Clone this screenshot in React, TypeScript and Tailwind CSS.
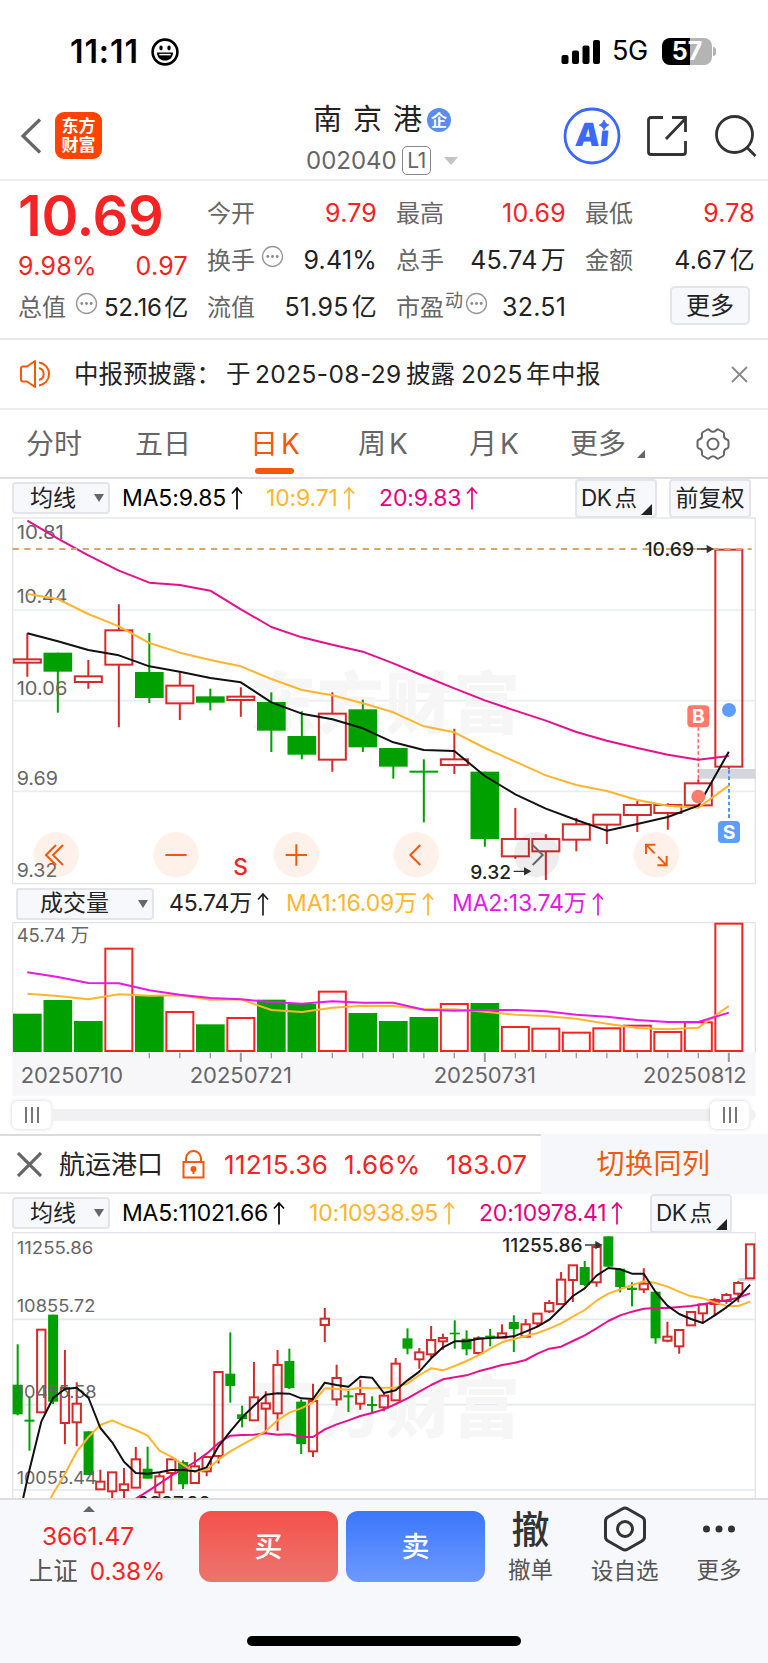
import { ReactNode } from "react";

type Candle = [string, number, number, number, number];

interface ITextProps {
  x: number;
  y: number;
  width: number;
  size: number;
  fill: string;
  children: string;
}

// chart data is in chart units, 3 units per pixel
// [direction, high, body top, body bottom, low]
const dayCandles: Candle[] = [
  ["r", 370, 448, 458, 500],
  ["g", 428, 428, 485, 608],
  ["r", 450, 499, 516, 536],
  ["r", 283, 361, 464, 652],
  ["g", 369, 486, 564, 579],
  ["r", 487, 527, 580, 630],
  ["g", 536, 559, 578, 601],
  ["r", 532, 560, 570, 620],
  ["g", 547, 576, 662, 726],
  ["g", 604, 678, 734, 748],
  ["r", 547, 611, 749, 785],
  ["g", 569, 598, 712, 726],
  ["g", 714, 714, 770, 806],
  ["g", 748, 782, 788, 937],
  ["r", 656, 748, 765, 792],
  ["g", 785, 785, 987, 1010],
  ["r", 894, 987, 1039, 1046],
  ["r", 973, 987, 1024, 1110],
  ["r", 924, 943, 989, 1024],
  ["r", 914, 914, 944, 1002],
  ["r", 873, 885, 915, 966],
  ["r", 880, 885, 909, 959],
  ["r", 808, 820, 886, 886],
  ["r", 119, 119, 770, 778],
];
const dayMa5 = [370, 394, 420, 436, 469, 485, 504, 517, 577, 611, 628, 655, 697, 720, 723, 798, 853, 896, 930, 962, 942, 921, 887, 725];
const dayMa10 = [252, 267, 312, 349, 399, 428, 450, 469, 507, 540, 556, 580, 607, 649, 667, 714, 755, 796, 825, 843, 870, 887, 893, 827];
const dayMa20 = [32, 86, 136, 182, 218, 225, 242, 298, 351, 382, 404, 425, 460, 498, 535, 571, 602, 632, 666, 692, 714, 734, 749, 738];

const volumes: [string, number][] = [
  ["g", 401], ["g", 360], ["g", 423], ["r", 206], ["g", 346], ["r", 396],
  ["g", 433], ["r", 414], ["g", 359], ["g", 372], ["r", 335], ["g", 399],
  ["g", 423], ["g", 411], ["r", 372], ["g", 369], ["r", 441], ["r", 446],
  ["r", 458], ["r", 445], ["r", 437], ["r", 456], ["r", 427], ["r", 131],
];
const volMa1 = [341, 348, 358, 343, 347, 346, 359, 358, 390, 396, 383, 377, 378, 388, 388, 395, 404, 408, 416, 431, 444, 448, 443, 378];
const volMa2 = [277, 291, 309, 310, 331, 344, 354, 358, 366, 371, 364, 368, 368, 389, 392, 390, 390, 394, 404, 410, 420, 426, 426, 398];

const sectorCandles: Candle[] = [
  ["g", 644, 765, 854, 857], ["g", 800, 870, 876, 963], ["r", 600, 600, 848, 848],
  ["g", 555, 555, 816, 823], ["r", 661, 775, 880, 944], ["r", 758, 822, 878, 950],
  ["g", 905, 905, 1036, 1036], ["r", 1020, 1056, 1079, 1079], ["r", 1028, 1028, 1085, 1110],
  ["r", 1015, 1064, 1081, 1110], ["r", 952, 989, 1074, 1074], ["g", 951, 1017, 1047, 1047],
  ["r", 1030, 1040, 1088, 1110], ["r", 989, 989, 1030, 1083], ["g", 992, 997, 1064, 1078],
  ["r", 968, 1010, 1060, 1060], ["r", 980, 982, 1025, 1040], ["r", 727, 727, 979, 1002],
  ["g", 608, 732, 769, 819], ["g", 828, 854, 868, 893], ["r", 697, 803, 872, 872],
  ["r", 785, 821, 837, 910], ["r", 661, 706, 851, 903], ["g", 657, 694, 775, 778],
  ["g", 810, 816, 943, 973], ["r", 762, 814, 965, 982], ["r", 535, 567, 586, 637],
  ["r", 705, 745, 809, 828], ["g", 784, 797, 803, 847], ["r", 750, 793, 822, 840],
  ["g", 800, 823, 829, 850], ["r", 790, 798, 833, 845], ["r", 685, 702, 812, 812],
  ["g", 596, 626, 657, 674], ["r", 655, 668, 689, 717], ["r", 589, 631, 674, 684],
  ["r", 612, 625, 635, 660], ["g", 572, 609, 614, 657], ["g", 602, 627, 659, 677],
  ["r", 620, 626, 670, 675], ["g", 598, 618, 624, 650], ["r", 584, 611, 624, 624],
  ["g", 557, 577, 598, 667], ["r", 568, 584, 621, 621], ["r", 552, 552, 581, 590],
  ["r", 511, 520, 545, 550], ["r", 427, 450, 523, 523], ["r", 407, 407, 451, 517],
  ["g", 394, 412, 466, 470], ["r", 345, 352, 458, 471], ["g", 320, 320, 411, 411],
  ["g", 416, 417, 472, 488], ["g", 458, 474, 481, 530], ["r", 416, 462, 479, 490],
  ["g", 486, 486, 626, 642], ["r", 576, 621, 633, 638], ["r", 600, 601, 650, 672],
  ["r", 547, 547, 587, 587], ["r", 524, 524, 551, 580], ["r", 505, 511, 523, 560],
  ["r", 490, 496, 514, 522], ["r", 454, 460, 492, 518], ["r", 344, 344, 446, 446],
];
const sectorMa5 = [1180, 1020, 876, 805, 778, 774, 805, 895, 938, 996, 1030, 1032, 1028, 1021, 1021, 1025, 1013, 950, 905, 863, 828, 795, 791, 792, 806, 808, 759, 766, 771, 741, 744, 790, 782, 752, 726, 686, 653, 635, 635, 627, 625, 623, 620, 606, 591, 570, 536, 499, 476, 438, 415, 419, 432, 432, 487, 528, 553, 568, 580, 557, 533, 505, 465];
const sectorMa10 = [1300, 1230, 1160, 1092, 1032, 966, 922, 886, 872, 888, 901, 918, 963, 981, 1005, 1027, 1020, 990, 965, 945, 926, 904, 872, 849, 836, 818, 776, 778, 780, 774, 776, 774, 774, 762, 736, 716, 722, 709, 694, 677, 657, 638, 628, 619, 610, 597, 581, 561, 541, 513, 492, 479, 466, 455, 460, 471, 486, 500, 506, 518, 529, 529, 516];
const sectorMa20 = [1350, 1330, 1310, 1290, 1270, 1250, 1230, 1210, 1170, 1150, 1107, 1085, 1062, 1038, 1018, 997, 972, 940, 918, 916, 915, 911, 915, 914, 922, 922, 899, 884, 872, 859, 850, 839, 823, 806, 786, 766, 749, 743, 737, 725, 716, 706, 700, 691, 672, 657, 651, 634, 617, 596, 574, 557, 546, 537, 535, 535, 532, 529, 524, 517, 512, 504, 491];

const dayX = (i: number) => 82 + i * 91.5;
const sectorX = (i: number) => 53 + i * 35.44;

const ChartText = ({ x, y, width, size, fill, children }: ITextProps) => (
  <text x={x} y={y} fontSize={size} fill={fill} textLength={width} lengthAdjust="spacingAndGlyphs">
    {children}
  </text>
);

const Line = ({ data, x, color }: { data: number[]; x: (i: number) => number; color: string }) => (
  <polyline
    points={data.map((y, i) => `${x(i)},${y}`).join(" ")}
    fill="none"
    stroke={color}
    strokeWidth={6}
    strokeLinejoin="round"
  />
);

const Candles = ({ data, x, width }: { data: Candle[]; x: (i: number) => number; width: number }) => (
  <>
    {data.map(([dir, high, top, bottom, low], i) => {
      const cx = x(i);
      if (dir === "g") {
        return (
          <g key={i} fill="#00a000">
            <rect x={cx - 3} y={high} width={6} height={low - high} />
            <rect x={cx - width / 2} y={top} width={width} height={bottom - top} />
          </g>
        );
      }
      return (
        <g key={i} fill="none" stroke="#d42a2a" strokeWidth={6}>
          <path d={`M${cx} ${high}V${top}M${cx} ${bottom}V${low}`} />
          <rect x={cx - width / 2 + 2.5} y={top} width={width - 5} height={bottom - top} />
        </g>
      );
    })}
  </>
);

const Watermark = ({ y }: { y: number }) => (
  <text x={748} y={y} fontSize={200} fontWeight={900} fill="#f6f6f7" textLength={812}>
    东方财富
  </text>
);

const More = () => (
  <svg className="size-[23px] shrink-0" viewBox="0 0 23 23">
    <circle cx="11.5" cy="11.5" r="10" fill="none" stroke="#999" strokeWidth="1.4" />
    <g fill="#888">
      <circle cx="6.8" cy="11.5" r="1.4" />
      <circle cx="11.5" cy="11.5" r="1.4" />
      <circle cx="16.2" cy="11.5" r="1.4" />
    </g>
  </svg>
);

const Up = () => (
  <svg className="w-[12px] h-[24px] shrink-0" viewBox="0 0 12 24" fill="none" stroke="currentColor" strokeWidth="1.7">
    <path d="M6 23.5V2M1 7.5L6 2L11 7.5" />
  </svg>
);

const Quote = ({ label, value, red }: { label: ReactNode; value: string; red?: boolean }) => (
  <div className="flex h-[47px] items-center justify-between">
    <div className="flex items-center text-[24px] text-[#666]">{label}</div>
    <p className={`text-[25px] tracking-[0.2px] [word-spacing:-4px] ${red ? "text-[#f52323]" : "text-[#222]"}`}>{value}</p>
  </div>
);

const Select = ({ label, className }: { label: string; className: string }) => (
  <div className={`flex items-center justify-between rounded border-2 border-[#e4e5ea] bg-[#f7f8fb] pr-1 text-[23px] leading-none text-[#222] ${className}`}>
    <span>{label}</span>
    <svg className="h-[8px] w-[10px]" viewBox="0 0 10 8">
      <path d="M0 0H10L5 8Z" fill="#666" />
    </svg>
  </div>
);

const DkButton = () => (
  <div className="flex h-[39px] w-[82px] shrink-0 items-center rounded border-2 border-[#e4e5ea] bg-[#f7f8fb] pl-1 text-[22.5px] text-[#222]">
    <span className="w-[59px] tracking-[-0.4px] [word-spacing:-3px]">DK 点</span>
    <svg className="ml-px mt-[22px] size-[11px] shrink-0" viewBox="0 0 11 11">
      <path d="M11 0V11H0Z" fill="#222" />
    </svg>
  </div>
);

const StatusBar = () => (
  <div className="flex h-[90px] items-center pt-[13px] pl-[70px] text-black">
    <p className="w-[81px] text-[32px] font-semibold tracking-[0.9px]">11:11</p>
    <svg className="size-[28px]" viewBox="0 0 28 28">
      <circle cx="14" cy="14" r="12.4" fill="none" stroke="#000" strokeWidth="2.6" />
      <ellipse cx="10" cy="10" rx="1.7" ry="2.4" />
      <ellipse cx="18" cy="10" rx="1.7" ry="2.4" />
      <path d="M6 14.5H22C22 19.5 18.5 22.6 14 22.6S6 19.5 6 14.5Z" />
      <path d="M8.3 16.6H19.7" stroke="#fff" strokeWidth="1.5" />
    </svg>
    <svg className="ml-[382px] h-[24px] w-[39px]" viewBox="0 0 39 24">
      <rect x="0.5" y="15" width="7" height="9" rx="2" />
      <rect x="11" y="10.5" width="7" height="13.5" rx="2" />
      <rect x="21.5" y="5.5" width="7" height="18.5" rx="2" />
      <rect x="32" y="0" width="7" height="24" rx="2" />
    </svg>
    <p className="ml-[12px] w-[50px] text-[27px] tracking-[-0.5px]">5G</p>
    <div className="flex h-[27px] w-[50px] items-center justify-center rounded-[8px] bg-gradient-to-r from-black from-57% to-[#b4b4b4] to-57% text-[25px] leading-none font-bold text-white">
      57
    </div>
    <div className="ml-px h-[9px] w-[3px] rounded-r-full bg-[#b4b4b4]" />
  </div>
);

const Header = () => (
  <header className="flex h-[91px] items-center border-b-2 border-[#ececee] pt-[2px] pl-[20px]">
    <svg className="h-[36px] w-[22px]" viewBox="0 0 22 36" fill="none" stroke="#666" strokeWidth="3.2">
      <path d="M20 1.5L3 18L20 34.5" />
    </svg>
    <div className="ml-[13px] flex size-[47px] flex-col items-center justify-center rounded-[9px] bg-[#ff4400] text-[17px] leading-[19px] font-bold text-white">
      <span>东方</span>
      <span>财富</span>
    </div>
    <div className="mt-[3px] ml-[204px] w-[255px]">
      <div className="flex h-[40px] items-center pl-[7px]">
        <span className="text-[29px] tracking-[11px] text-[#222]">南京港</span>
        <span className="-ml-[6px] flex size-[24px] items-center justify-center rounded-full bg-[#5b8def] text-[16px] font-bold text-white">
          企
        </span>
      </div>
      <div className="flex h-[34px] items-center pt-[7px] text-[#666]">
        <span className="w-[96px] text-[24px]">002040</span>
        <span className="flex h-[29px] w-[29px] items-center justify-center rounded-[5px] border-[1.5px] border-[#888] text-[21px] tracking-[-0.5px]">
          L1
        </span>
        <svg className="ml-[13px] h-[8px] w-[14px]" viewBox="0 0 14 8">
          <path d="M0 0H14L7 8Z" fill="#c4c4c4" />
        </svg>
      </div>
    </div>
    <svg className="ml-[2px] size-[58px]" viewBox="0 0 58 58">
      <circle cx="29" cy="29" r="27" fill="none" stroke="#3c68fb" strokeWidth="2.8" />
      <text
        x="12"
        y="39.5"
        fontSize="32"
        fontWeight="900"
        fill="#3c68fb"
        textLength="34"
        lengthAdjust="spacingAndGlyphs"
        transform="skewX(-5) translate(3 0)"
      >
        Ai
      </text>
      <rect x="34" y="12" width="13" height="11.5" fill="#fff" />
      <path d="M41 13Q42 17.200 45.700 18Q42 19 41 22.800Q40 19 36.300 18Q40 17.200 41 13Z" fill="#3c68fb" stroke="#3c68fb" />
    </svg>
    <svg className="ml-[25px] size-[42px]" viewBox="0 0 42 42" fill="none" stroke="#333" strokeWidth="2.8">
      <path d="M17 2.500H5Q2.500 2.500 2.500 5V37Q2.500 39.500 5 39.500H37Q39.500 39.500 39.500 37V26M20 24L39.500 3.500M26 2.500H39.500V17" />
    </svg>
    <svg className="ml-[25px] size-[44px]" viewBox="0 0 44 44" fill="none" stroke="#333" strokeWidth="2.8">
      <circle cx="21.500" cy="20.500" r="18" />
      <path d="M33.500 33L42.500 42" />
    </svg>
  </header>
);

const QuotePanel = () => (
  <section className="flex h-[159px] border-b-2 border-[#e9e9ec] pt-[9px] pl-[18px]">
    <div className="w-[170px]">
      <p className="-mt-[2px] mb-[2px] h-[56px] text-[56px] leading-[56px] font-semibold tracking-[-0.3px] text-[#f52323]">
        10.69
      </p>
      <div className="flex h-[38px] items-center justify-between pt-[4px] text-[25px] tracking-[0.3px] text-[#f52323]">
        <span>9.98%</span>
        <span>0.97</span>
      </div>
      <div className="flex h-[47px] items-center justify-between text-[24px]">
        <span className="text-[#666]">总值</span>
        <span className="mb-[9px] ml-[3px] flex">
          <More />
        </span>
        <span className="tracking-[-0.2px] text-[#222] [word-spacing:-4px]">52.16 亿</span>
      </div>
    </div>
    <div className="ml-[19px] w-[170px]">
      <Quote label="今开" value="9.79" red />
      <Quote
        label={
          <>
            换手
            <span className="mb-[9px] ml-[6px] flex">
              <More />
            </span>
          </>
        }
        value="9.41%"
      />
      <Quote label="流值" value="51.95 亿" />
    </div>
    <div className="ml-[19px] w-[170px]">
      <Quote label="最高" value="10.69" red />
      <Quote label="总手" value="45.74 万" />
      <Quote
        label={
          <>
            市盈
            <span className="mb-[14px] ml-px text-[18px]">动</span>
            <span className="mb-[9px] ml-[2px] flex">
              <More />
            </span>
          </>
        }
        value="32.51"
      />
    </div>
    <div className="ml-[19px] w-[170px]">
      <Quote label="最低" value="9.78" red />
      <Quote label="金额" value="4.67 亿" />
      <div className="mt-[2px] ml-[85px] flex h-[39px] w-[80px] items-center justify-center rounded-[5px] border-2 border-[#e4e5ea] bg-[#f7f8fb] text-[24px] text-[#222]">
        更多
      </div>
    </div>
  </section>
);

const Notice = () => (
  <section className="flex h-[70px] items-center border-b-2 border-[#ececee] pl-[19px]">
    <svg className="h-[30px] w-[34px]" viewBox="0 0 34 30" fill="none" stroke="#f25a0a" strokeWidth="2">
      <path d="M16 2V28L8 22.5H4Q2 22.5 2 20.5V9.5Q2 7.5 4 7.5H8Z" strokeLinejoin="round" />
      <path d="M20 3.5A11.6 11.6 0 0 1 20 26.5M20 9A6.2 6.2 0 0 1 20 21" />
    </svg>
    <p className="ml-[21px] flex w-[657px] text-[24.5px] text-[#222]">
      <span className="w-[152px]">中报预披露：</span>
      <span className="w-[29px]">于</span>
      <span className="w-[151px] tracking-[0.4px]">2025-08-29</span>
      <span className="w-[55px]">披露</span>
      <span className="w-[65px] tracking-[0.4px]">2025</span>
      <span className="tracking-[0.5px]">年中报</span>
    </p>
    <svg className="size-[17px]" viewBox="0 0 17 17" stroke="#888" strokeWidth="1.8">
      <path d="M1 1L16 16M16 1L1 16" />
    </svg>
  </section>
);

const Tabs = () => (
  <nav className="flex h-[69px] items-center border-b-2 border-[#dddde3] pl-[26px] text-[28px] text-[#666] [word-spacing:-5px]">
    <span className="w-[109px]">分时</span>
    <span className="w-[115px]">五日</span>
    <span className="relative w-[108px] text-[#f25a0a]">
      日 K
      <i className="absolute -bottom-[9px] left-[5px] h-[6px] w-[39px] rounded-full bg-[#f25a0a]" />
    </span>
    <span className="w-[111px]">周 K</span>
    <span className="w-[101px]">月 K</span>
    <span className="w-[67px]">更多</span>
    <svg className="mt-[20px] size-[8px]" viewBox="0 0 8 8">
      <path d="M8 0V8H0Z" fill="#666" />
    </svg>
    <svg className="ml-[50px] size-[36px]" viewBox="0 0 36 36" fill="none" stroke="#666" strokeWidth="2">
      <path
        d="M12.5 3.5Q14 3 15 4.5Q18 7 21 4.5Q22 3 23.5 3.5L28 6Q29.5 7 29 8.5Q28.500 12.500 32 13.500Q33.500 14 33.500 15.500V20.500Q33.500 22 32 22.500Q28.500 23.500 29 27.500Q29.500 29 28 30L23.500 32.500Q22 33 21 31.500Q18 29 15 31.500Q14 33 12.500 32.500L8 30Q6.500 29 7 27.500Q7.500 23.500 4 22.500Q2.500 22 2.500 20.500V15.500Q2.500 14 4 13.500Q7.500 12.500 7 8.500Q6.500 7 8 6Z"
        strokeLinejoin="round"
      />
      <circle cx="18" cy="18" r="5.5" />
    </svg>
  </nav>
);

const DayChart = () => (
  <section>
    <div className="flex h-[38px] items-center pl-[12px] text-[23px]">
      <Select label="均线" className="h-[32px] w-[98px] pl-[16px]" />
      <p className="ml-[12px] flex w-[144px] items-center gap-[5px] text-black">
        <span className="tracking-[-0.15px]">MA5:9.85</span>
        <Up />
      </p>
      <p className="flex w-[113px] items-center gap-[5px] text-[#ffb52e]">
        <span className="tracking-[-0.15px]">10:9.71</span>
        <Up />
      </p>
      <p className="flex w-[196px] items-center gap-[5px] text-[#e6007e]">
        <span className="tracking-[-0.15px]">20:9.83</span>
        <Up />
      </p>
      <DkButton />
      <div className="ml-[12px] flex h-[39px] w-[82px] items-center justify-center rounded border-2 border-[#e4e5ea] bg-[#f7f8fb] text-[23px] text-[#222]">
        前复权
      </div>
    </div>
    <svg className="block h-[368px] w-[768px]" viewBox="0 21 2304 1104">
      <rect x="38" y="24" width="2228" height="1097" fill="none" stroke="#e3e4e9" strokeWidth="4" />
      <path d="M38 300H2266M38 572H2266M38 844H2266" stroke="#e9edf3" strokeWidth="5" />
      <Watermark y={653} />
      <rect x="2095" y="777" width="171" height="29" fill="#d3d6db" />
      <Candles data={dayCandles} x={dayX} width={86} />
      <ChartText x={50} y={88} width={142} size={58} fill="#666">10.81</ChartText>
      <ChartText x={50} y={279} width={152} size={58} fill="#666">10.44</ChartText>
      <ChartText x={50} y={554} width={152} size={58} fill="#666">10.06</ChartText>
      <ChartText x={50} y={826} width={124} size={58} fill="#666">9.69</ChartText>
      <ChartText x={50} y={1100} width={122} size={58} fill="#666">9.32</ChartText>
      <path d="M2095 652V808" stroke="#ff6b5a" strokeWidth="5" strokeDasharray="10 8" />
      <path d="M2187 780V930" stroke="#4c97ff" strokeWidth="6" strokeDasharray="11 8" />
      <Line data={dayMa20} x={dayX} color="#e6108e" />
      <Line data={dayMa10} x={dayX} color="#ffb52e" />
      <Line data={dayMa5} x={dayX} color="#111" />
      <path d="M38 117H2255" stroke="#dba468" strokeWidth="6" strokeDasharray="18.500 16.500" />
      <g fontWeight={500}>
        <ChartText x={1934} y={139} width={148} size={57} fill="#222">10.69</ChartText>
        <ChartText x={1411} y={1107} width={122} size={57} fill="#222">9.32</ChartText>
      </g>
      <g fill="#333" stroke="#333" strokeWidth="4">
        <path d="M2090 117H2125M2122 108L2138 117L2122 126Z" />
        <path d="M1541 1084H1578M1574 1075L1590 1084L1574 1093Z" />
      </g>
      <g>
        <rect x="2062" y="586" width="66" height="66" rx="12" fill="#ff7a6b" />
        <text x="2095" y="639" textAnchor="middle" fontSize="58" fontWeight="700" fill="#fff">B</text>
        <rect x="2154" y="933" width="66" height="66" rx="12" fill="#5c9dff" />
        <text x="2187" y="987" textAnchor="middle" fontSize="58" fontWeight="700" fill="#fff">S</text>
        <circle cx="2095" cy="860" r="21" fill="#ff7a6b" />
        <circle cx="2187" cy="600" r="21" fill="#5c9dff" />
      </g>
      <g fill="#f9762b" fillOpacity="0.1">
        <circle cx="169" cy="1034" r="68" />
        <circle cx="528" cy="1034" r="68" />
        <circle cx="889" cy="1034" r="68" />
        <circle cx="1249" cy="1034" r="68" />
        <circle cx="1969" cy="1034" r="68" />
      </g>
      <circle cx="1610" cy="1034" r="68" fill="#000" fillOpacity="0.07" />
      <g fill="none" stroke="#f25a0a" strokeWidth="6">
        <path d="M168 1005L138 1035L168 1065M189 1005L159 1035L189 1065" />
        <path d="M496 1035H560M857 1035H921M889 1003V1067" />
        <path d="M1261 1005L1231 1035L1261 1065" />
        <path d="M1938 1032V1004H1966M1938 1004L1964 1030M2000 1038V1066H1972M2000 1066L1974 1040" />
      </g>
      <path d="M1598 1005L1628 1035L1598 1065" fill="none" stroke="#666" strokeWidth="6" />
      <text x="700" y="1096" fontSize="68" fontWeight="500" fill="#f52323">S</text>
    </svg>
  </section>
);

const VolumeChart = () => (
  <section>
    <div className="flex h-[37px] items-center pl-[16px] text-[23px]">
      <Select label="成交量" className="h-[32px] w-[138px] pl-[22px]" />
      <p className="ml-[15px] flex w-[117px] items-center gap-[5px] text-[#222]">
        <span className="tracking-[-0.15px]">45.74万</span>
        <Up />
      </p>
      <p className="flex w-[166px] items-center gap-[5px] text-[#ffb52e]">
        <span className="tracking-[-0.15px]">MA1:16.09万</span>
        <Up />
      </p>
      <p className="flex items-center gap-[5px] text-[#e619e6]">
        <span className="tracking-[-0.15px]">MA2:13.74万</span>
        <Up />
      </p>
    </div>
    <svg className="block h-[174px] w-[768px]" viewBox="0 126 2304 522">
      <rect x="37" y="517" width="2230" height="130" fill="#f7f7fa" />
      <path d="M38 518V128H2266V518" fill="none" stroke="#e3e4e9" strokeWidth="4" />
      {volumes.map(([dir, top], i) =>
        dir === "g" ? (
          <rect key={i} x={dayX(i) - 43} y={top} width={86} height={516 - top} fill="#00a000" />
        ) : (
          <rect key={i} x={dayX(i) - 40.5} y={top} width={81} height={513 - top} fill="#fff" stroke="#f72323" strokeWidth={6} />
        )
      )}
      {volumes.map((_, i) =>
        i > 3 ? (
          <path key={i} d={i % 8 === 7 ? `M${dayX(i)} 518v28` : `M${dayX(i)} 518v17`} stroke="#999" strokeWidth={i % 8 === 7 ? 6 : 4} />
        ) : null
      )}
      <Line data={volMa1} x={dayX} color="#ffb52e" />
      <Line data={volMa2} x={dayX} color="#e619e6" />
      <ChartText x={50} y={187} width={218} size={57} fill="#666">45.74 万</ChartText>
      <ChartText x={62} y={610} width={307} size={64} fill="#666">20250710</ChartText>
      <ChartText x={569} y={610} width={307} size={64} fill="#666">20250721</ChartText>
      <ChartText x={1301} y={610} width={307} size={64} fill="#666">20250731</ChartText>
      <ChartText x={1929} y={610} width={311} size={64} fill="#666">20250812</ChartText>
    </svg>
    <div className="flex h-[38px] items-center pr-[12px] pl-[12px]">
      <Handle />
      <div className="h-[12px] flex-1 bg-[#f1f1f4]" />
      <Handle />
      <div className="h-[12px] w-[7px] rounded-r-full bg-[#f1f1f4]" />
    </div>
  </section>
);

const Handle = () => (
  <div className="flex h-[28px] w-[39px] items-center justify-center gap-[4px] rounded-[6px] bg-white shadow-[0_0_4px_rgba(0,0,0,0.18)]">
    <i className="h-[16px] w-[2px] bg-[#777]" />
    <i className="h-[16px] w-[2px] bg-[#777]" />
    <i className="h-[16px] w-[2px] bg-[#777]" />
  </div>
);

const Sector = () => (
  <section>
    <div className="flex h-[60px] items-stretch text-[26px]">
      <div className="flex w-[541px] items-center border-t-2 border-b-2 border-t-[#dadae1] border-b-[#e9e9ec] pl-[17px]">
        <svg className="size-[25px]" viewBox="0 0 25 25" stroke="#666" strokeWidth="3.2">
          <path d="M1 1L24 24M24 1L1 24" />
        </svg>
        <span className="ml-[17px] w-[123px] text-[#222]">航运港口</span>
        <svg className="h-[29px] w-[23px]" viewBox="0 0 23 29" fill="none" stroke="#f25a0a" strokeWidth="2">
          <path d="M1.5 12H21.5V27.5H1.5ZM4 12V8.5A7.5 7.5 0 0 1 19 8.5V12" />
          <path d="M11.5 20V24" />
          <circle cx="11.5" cy="19" r="2" fill="#f25a0a" />
        </svg>
        <span className="ml-[19px] w-[120px] tracking-[0.3px] text-[#f52323]">11215.36</span>
        <span className="w-[102px] tracking-[0.3px] text-[#f52323]">1.66%</span>
        <span className="tracking-[0.3px] text-[#f52323]">183.07</span>
      </div>
      <div className="flex flex-1 items-center justify-center bg-[#f6f7fa] pr-[2px] text-[28px] tracking-[0.5px] text-[#f25a0a]">
        切换同列
      </div>
    </div>
    <div className="flex h-[38px] items-center pl-[12px] text-[23px]">
      <Select label="均线" className="h-[32px] w-[98px] pl-[16px]" />
      <p className="ml-[12px] flex w-[187px] items-center gap-[5px] text-black">
        <span className="tracking-[-0.2px]">MA5:11021.66</span>
        <Up />
      </p>
      <p className="flex w-[170px] items-center gap-[5px] text-[#ffb52e]">
        <span className="tracking-[-0.2px]">10:10938.95</span>
        <Up />
      </p>
      <p className="flex w-[171px] items-center gap-[5px] text-[#e6007e]">
        <span className="tracking-[-0.2px]">20:10978.41</span>
        <Up />
      </p>
      <DkButton />
    </div>
    <svg className="block h-[266px] w-[768px]" viewBox="0 307 2304 798">
      <path d="M38 1110V309H2266V1110" fill="none" stroke="#e3e4e9" strokeWidth="4" />
      <path d="M38 569H2266M38 825H2266M38 1081H2266" stroke="#e4e8f0" strokeWidth="5" />
      <Watermark y={907} />
      <rect x="2215" y="445" width="52" height="9" fill="#d3d6db" />
      <Candles data={sectorCandles} x={sectorX} width={30} />
      <ChartText x={50} y={372} width={230} size={51} fill="#666">11255.86</ChartText>
      <ChartText x={50} y={547} width={236} size={51} fill="#666">10855.72</ChartText>
      <ChartText x={50} y={805} width={240} size={51} fill="#666">10455.58</ChartText>
      <ChartText x={50} y={1062} width={240} size={51} fill="#666">10055.44</ChartText>
      <Line data={sectorMa20} x={sectorX} color="#e6108e" />
      <Line data={sectorMa10} x={sectorX} color="#ffb52e" />
      <Line data={sectorMa5} x={sectorX} color="#111" />
      <g fontWeight={500}>
        <ChartText x={1507} y={366} width={241} size={55} fill="#222">11255.86</ChartText>
        <ChartText x={412} y={1141} width={220} size={55} fill="#222">9887.80</ChartText>
      </g>
      <path d="M1755 346H1792M1788 337L1804 346L1788 355Z" fill="#333" stroke="#333" strokeWidth="4" />
    </svg>
  </section>
);

const NavItem = ({ label, children }: { label: string; children: ReactNode }) => (
  <div className="flex flex-col items-center text-[#555]">
    <div className="flex h-[48px] items-center text-[#333]">{children}</div>
    <span className="mt-px text-[22.5px] leading-[36px]">{label}</span>
  </div>
);

const BottomBar = () => (
  <footer className="h-[165px] border-t-2 border-[#dddde2] bg-[#f7f8fb]">
    <div className="flex h-[88px] pt-[6px]">
      <div className="flex w-[199px] flex-col items-center pr-[5px]">
        <svg className="mr-[17px] h-[7px] w-[14px]" viewBox="0 0 14 7">
          <path d="M0 7H14L7 0Z" fill="#666" />
        </svg>
        <p className="mt-[6px] mr-[18px] text-[24.5px] leading-[36px] text-[#f52323]">3661.47</p>
        <p className="flex gap-[12px] text-[24.5px] leading-[34px]">
          <span className="text-[#555]">上证</span>
          <span className="text-[#f52323]">0.38%</span>
        </p>
      </div>
      <div className="mt-[5px] flex h-[71px] w-[139px] items-center justify-center rounded-[12px] bg-gradient-to-b from-[#f4504a] to-[#ec746d] text-[28px] font-medium text-white">
        买
      </div>
      <div className="mt-[5px] ml-[8px] flex h-[71px] w-[139px] items-center justify-center rounded-[12px] bg-gradient-to-b from-[#3b77fa] to-[#6c99ff] text-[28px] font-medium text-white">
        卖
      </div>
      <div className="ml-[23px] flex flex-1 gap-[38px]">
        <NavItem label="撤单">
          <span className="text-[38px] leading-none font-medium">撤</span>
        </NavItem>
        <NavItem label="设自选">
          <svg className="h-[46px] w-[44px]" viewBox="0 0 44 46" fill="none" stroke="#333" strokeWidth="3">
            <path d="M19.5 2.7Q22 1.3 24.5 2.7L39 11Q41.5 12.5 41.5 15V31Q41.5 33.5 39 35L24.5 43.3Q22 44.7 19.5 43.3L5 35Q2.5 33.5 2.5 31V15Q2.5 12.5 5 11Z" />
            <circle cx="22" cy="23" r="7.5" />
          </svg>
        </NavItem>
        <NavItem label="更多">
          <svg className="h-[8px] w-[34px]" viewBox="0 0 34 8" fill="#333">
            <circle cx="4.5" cy="4" r="3.5" />
            <circle cx="17" cy="4" r="3.5" />
            <circle cx="29.5" cy="4" r="3.5" />
          </svg>
        </NavItem>
      </div>
    </div>
    <div className="mx-auto mt-[48px] h-[10px] w-[274px] rounded-full bg-black" />
  </footer>
);

export default function App() {
  return (
    <main className="flex h-[1663px] w-[768px] flex-col overflow-hidden bg-white font-['Inter','Noto_Sans_CJK_SC',sans-serif] whitespace-nowrap">
      <StatusBar />
      <Header />
      <QuotePanel />
      <Notice />
      <Tabs />
      <DayChart />
      <VolumeChart />
      <Sector />
      <BottomBar />
    </main>
  );
}
